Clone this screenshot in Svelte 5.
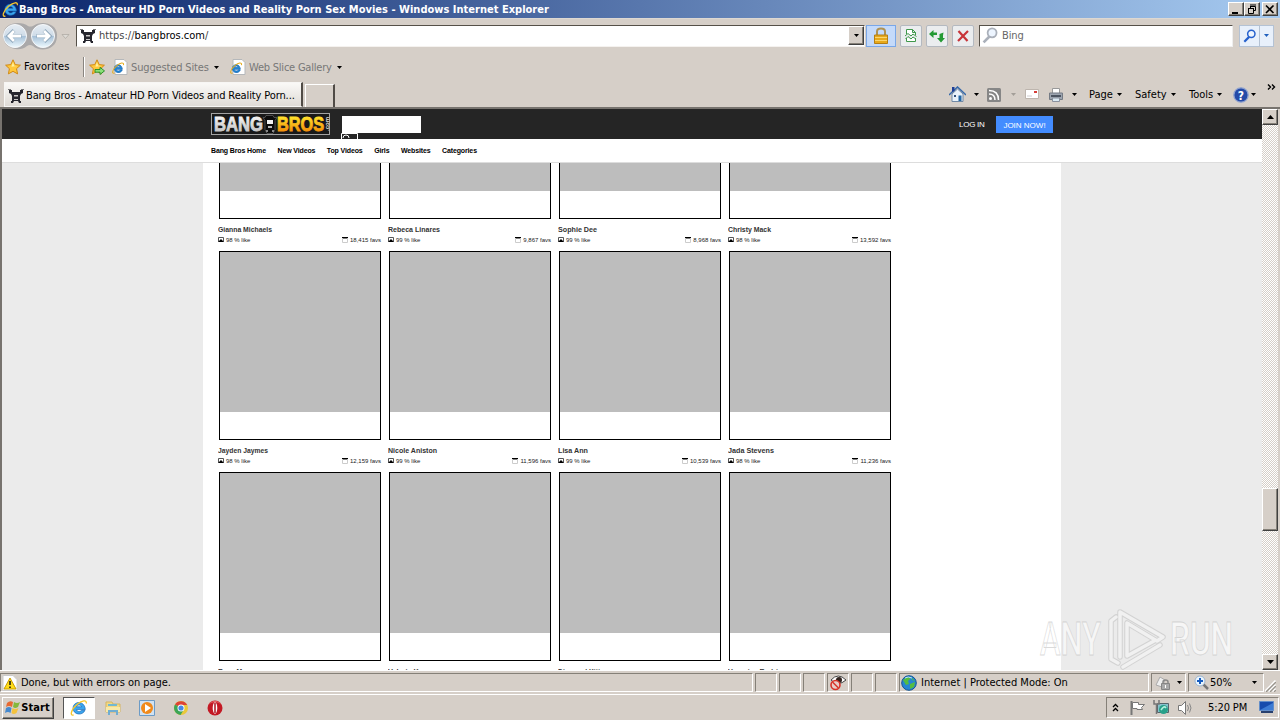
<script lang="ts">
  const sections = ['Bang Bros Home', 'New Videos', 'Top Videos', 'Girls', 'Websites', 'Categories'];

  const models = [
    { name: 'Gianna Michaels', like: 98, favs: '18,415', w: 54 },
    { name: 'Rebeca Linares', like: 99, favs: '9,867', w: 52 },
    { name: 'Sophie Dee', like: 99, favs: '8,968', w: 39 },
    { name: 'Christy Mack', like: 98, favs: '13,592', w: 43 },
    { name: 'Jayden Jaymes', like: 98, favs: '12,159', w: 50 },
    { name: 'Nicole Aniston', like: 99, favs: '11,596', w: 49 },
    { name: 'Lisa Ann', like: 99, favs: '10,539', w: 30 },
    { name: 'Jada Stevens', like: 98, favs: '11,236', w: 46 },
    { name: 'Rose Monroe', like: 98, favs: '9,120', w: 43 },
    { name: 'Valerie Kay', like: 98, favs: '8,740', w: 39 },
    { name: 'Diamond Kitty', like: 99, favs: '8,212', w: 46 },
    { name: 'Veronica Rodriguez', like: 98, favs: '8,031', w: 66 }
  ];
</script>

{#snippet ie(size)}
  <svg width={size} height={size} viewBox="0 0 16 16" fill="none">
    <path d="M13.600 9.400H5.800c.5 2.200 3.300 2.400 4.500.6h3c-1.900 5.200-10.600 4.200-10.600-1.800 0-6.500 10.400-7.400 10.900 1.200ZM5.800 6.900h4.500C9.800 4.900 6.300 4.800 5.800 6.900Z" fill="#3aa5ee" stroke="#1767b5" stroke-width=".6" />
    <path d="M3.200 14.200C-.3 15.400.6 9.600 6.500 4.700 10.700 1.200 15.200.4 14.400 4" stroke="#f5c62c" stroke-width="1.200" />
  </svg>
{/snippet}

{#snippet favicon()}
  <svg width="16" height="16" viewBox="0 0 16 16">
    <path d="M1 2h3v2h8V2h3v3l-2 1-1 2v5h1v2h-2l-1-2H6l-1 2H3v-2h1V8L3 6 1 5Z" fill="#25252d" />
    <path d="M6 7h4v1.500H6Zm0 4h4v1H6Z" fill="#c9c6c6" />
    <path d="M0 1h3v1H0Zm13 0h3v1h-3Z" fill="#777" />
  </svg>
{/snippet}

{#snippet page()}
  <svg width="16" height="16" viewBox="0 0 16 16">
    <path d="M3 .5h9l3 3v12H3Z" fill="#fff" stroke="#b5b8bb" />
    <g transform="translate(0 3) scale(.78)">
      <path d="M13.200 9.300H5.300c.3 2.700 4.100 3.100 5.300.9h2.500c-1.800 5.100-10 4.200-10-2 0-6.100 9.600-6.800 10.100 1.100ZM5.400 6.900h5.200C10.100 4.500 6 4.400 5.400 6.900Z" fill="#238cd8" stroke="#1767b5" />
      <path d="M3.200 14.200C-.7 15.800.3 9.600 6.500 4.400 10.700.8 15.600-.1 14.700 4" fill="none" stroke="#e5ad20" stroke-width="1.300" />
    </g>
  </svg>
{/snippet}

{#snippet star(arrow)}
  <svg width="16" height="16" viewBox="0 0 16 16">
    <path d="m8 .8 2.200 4.800 5.200.6-3.900 3.500 1.100 5.200L8 12.300l-4.600 2.600 1-5.200L.6 6.200l5.200-.6Z" fill="#ffc83b" stroke="#d18a16" />
    <path d="m8 3 1.200 3.700 3 .3-5.800.8Z" fill="#fff19c" />
    {#if arrow}
      <path d="M6 10.500h5V8.300l4.500 3.600-4.500 3.600v-2.300H6Z" fill="#8be078" stroke="#228b22" stroke-width=".9" />
    {/if}
  </svg>
{/snippet}

{#snippet down(color = '#000')}
  <svg class="down" width="5" height="3" viewBox="0 0 5 3"><path d="M0 0h5L2.500 3Z" fill={color} /></svg>
{/snippet}

{#snippet lens(color, size = 16)}
  <svg width={size} height={size} viewBox="0 0 16 16" fill="none">
    <path d="m7 9-5.500 5.500" stroke={color} stroke-width="2.500" />
    <circle cx="9.500" cy="5.500" r="4.200" fill="#edf5ff" stroke={color} stroke-width="1.700" />
  </svg>
{/snippet}

<div class="desktop">
  <header class="titlebar">
    {@render ie(17)}
    <span class="title">Bang Bros - Amateur HD Porn Videos and Reality Porn Sex Movies - Windows Internet Explorer</span>
    <div class="controls">
      <button class="raised" aria-label="Minimize"><svg width="12" height="11"><path d="M2 8h6v2H2Z" /></svg></button>
      <button class="raised" aria-label="Restore"><svg width="12" height="11" fill="none" stroke="#000"><path d="M4 1h6M4 2.500h5.500v4H8M4.500 2v2M2 4.500h6M2.500 5v4.500h5V5" /></svg></button>
      <button class="raised close" aria-label="Close"><svg width="12" height="11"><path d="m2 1.500 7.500 7.500M9.500 1.500 2 9" stroke="#000" stroke-width="1.600" /></svg></button>
    </div>
  </header>

  <div class="navbar">
    <svg class="travel" width="72" height="28" viewBox="0 0 72 28">
      <defs>
        <linearGradient id="orb" x2="0" y2="1"><stop stop-color="#e6edf3" /><stop offset=".48" stop-color="#cfdce8" /><stop offset=".52" stop-color="#a7c1d8" /><stop offset="1" stop-color="#eefaff" /></linearGradient>
      </defs>
      <path d="M3 14C3-1 22-1 28 4q2 1 5 0c8-6 25-3 24 10 0 15-18 16-24 10q-3-2-6 0C19 31 3 26 3 14Z" fill="#aaa9aa" />
      <circle cx="15" cy="14" r="11.500" fill="url(#orb)" stroke="#f6f8fa" />
      <circle cx="43" cy="14" r="11.500" fill="url(#orb)" stroke="#f6f8fa" />
      <path d="M8.500 14h13M14 8.500 8.500 14l5.500 5.500M36.500 14h13M44 8.500l5.500 5.500-5.500 5.500" fill="none" stroke="#8fa8bc" stroke-width="4" />
      <path d="M9 14h12M14 9l-5 5 5 5M37 14h12M44 9l5 5-5 5" fill="none" stroke="#fff" stroke-width="2.800" />
      <path d="M62 12.500h7l-3.500 4Z" fill="#dedbd6" stroke="#aaa69f" stroke-width=".7" />
    </svg>
    <div class="address">
      {@render favicon()}
      <span class="url"><i>https://</i>bangbros.com<i>/</i></span>
      <button class="raised drop" aria-label="Addresses">{@render down()}</button>
    </div>
    <button class="lock" aria-label="Security report">
      <svg width="16" height="18" viewBox="0 0 16 18"><path d="M4 8V4.500Q4 1.500 8 1.500t4 3V8" fill="none" stroke="#af9253" stroke-width="2" /><path d="M1.500 8h13v8.500h-13Z" fill="#e7a91b" stroke="#b57e13" /><path d="M2 10.500h12M2 13.500h12" stroke="#fbd66d" /></svg>
    </button>
    <button class="tool" aria-label="Compatibility view">
      <svg width="14" height="15" fill="#fff" stroke="#3f984b"><path d="M2.500 6V1.500h6l3 3V7M8.500 1.500v3h3M2.500 10v3.500h9V10" /><path d="m1 8 3-2.500L7 8l2-2 3.500 2.500M1.500 11 4 8.500l3 2.500 2-2 3 2" fill="none" /></svg>
    </button>
    <button class="tool" aria-label="Refresh">
      <svg width="16" height="14" fill="#259a34"><path d="M0 5 4.500 1v2.500H8v2.500H4.500V9ZM16 9l-4 4.500L8 9h2.500V5l4-1.500-.5 3V9Z" /></svg>
    </button>
    <button class="tool" aria-label="Stop">
      <svg width="14" height="14"><path d="m2.500 2 9 10M12 2 2 12" stroke="#c83439" stroke-width="2.200" /></svg>
    </button>
    <div class="search">{@render lens('#aab0ba', 17)}<span>Bing</span></div>
    <button class="go" aria-label="Search">{@render lens('#2560cd', 14)}</button>
    <button class="go more" aria-label="Search options">{@render down('#1f5fbd')}</button>
  </div>

  <div class="favorites">
    {@render star(false)}<span class="fav">Favorites</span>
    <i class="rule"></i>
    {@render star(true)}
    <span class="link sites">{@render page()}<span>Suggested Sites</span>{@render down()}</span>
    <span class="link slices">{@render page()}<span>Web Slice Gallery</span>{@render down()}</span>
  </div>

  <div class="tabs">
    <div class="tab">{@render favicon()}<span>Bang Bros - Amateur HD Porn Videos and Reality Porn...</span></div>
    <div class="newtab"></div>
    <div class="commands">
      <svg width="17" height="17" viewBox="0 0 17 17"><path d="M3 8v7.500h11V8L8.500 3Z" fill="#e9f2fa" stroke="#7189a5" /><path d="M0 9 8.500 1 17 9" fill="none" stroke="#3568a9" stroke-width="1.500" /><path d="M3 1h2.500v4L3 6Z" fill="#1d3e96" /><path d="M9.500 9.500h3V15h-3Z" fill="#2367a4" /><path d="M5 9h2v2H5Z" fill="#31507a" /></svg>
      <span class="arrow home">{@render down()}</span>
      <svg width="14" height="14"><rect width="14" height="14" rx="1.500" fill="#868686" /><circle cx="3.500" cy="10.500" r="1.500" fill="#fff" /><path d="M2 6q6 0 6 6M2 2.500q9.500 0 9.500 9.500" fill="none" stroke="#fff" stroke-width="1.500" /></svg>
      <span class="arrow feed">{@render down('#a39e98')}</span>
      <svg width="14" height="11"><path d="M.5.5h13v9H.5Z" fill="#fff" stroke="#bdb5ae" /><path d="M9 3h3" stroke="#d73e38" stroke-width="2" /><path d="M2 7h5" stroke="#d0ced0" /></svg>
      <svg class="printer" width="16" height="16"><path d="M4.500 1.500h7v5h-7Z" fill="#fff" stroke="#999" /><path d="M1.500 6h13v6.500h-13Z" fill="#9da5b0" stroke="#757b85" /><path d="M3 8h10v2H3Z" fill="#4c5461" /><path d="M4.500 11h7v3.500h-7Z" fill="#dbeaf4" stroke="#8a919e" /></svg>
      <span class="arrow print">{@render down()}</span>
      <span class="cmd pagecmd">Page{@render down()}</span>
      <span class="cmd safety">Safety{@render down()}</span>
      <span class="cmd toolscmd">Tools{@render down()}</span>
      <svg width="16" height="16"><circle cx="8" cy="8" r="7.200" fill="#244aa8" stroke="#8fa2cf" stroke-width="1.300" /><text x="8" y="12.500" text-anchor="middle" font-size="12" font-weight="bold" fill="#fff">?</text></svg>
      <span class="arrow help">{@render down()}</span>
      <svg class="chevron" width="9" height="7" fill="none" stroke="#000" stroke-width="1.400"><path d="m1 .5 2.500 2.500L1 5.500M5 .5 7.500 3 5 5.500" /></svg>
    </div>
  </div>

  <div class="viewport">
    <main class="site">
      <div class="masthead">
        <svg class="logo" width="120" height="23" viewBox="0 0 120 23" font-family="Liberation Sans" font-weight="bold">
          <defs>
            <linearGradient id="silver" x2="0" y2="1"><stop stop-color="#fff" /><stop offset="1" stop-color="#bbb" /></linearGradient>
            <linearGradient id="gold" x2="0" y2="1"><stop offset=".2" stop-color="#ffdf2b" /><stop offset="1" stop-color="#f27b00" /></linearGradient>
          </defs>
          <rect x=".5" y=".5" width="118" height="21" fill="#191919" stroke="#a3a3a3" />
          <text x="3" y="18" font-size="20" textLength="49" lengthAdjust="spacingAndGlyphs" fill="url(#silver)" stroke="url(#silver)" stroke-width=".9">BANG</text>
          <text x="66" y="18" font-size="20" textLength="47" lengthAdjust="spacingAndGlyphs" fill="url(#gold)" stroke="url(#gold)" stroke-width=".9">BROS</text>
          <path d="M55 2.500h7l1 2h3l-2 3v9l-2 4h-6l-2-4v-9l-2-3h2Z" fill="#0c0c0c" stroke="#666" stroke-width=".7" />
          <path d="M56 7h6v4h-6Z" fill="#f2f2f2" /><path d="M57 13h4v2h-4Z" fill="#bbb" /><path d="M55 17h2v2h-2ZM61 17h2v2h-2Z" fill="#888" />
          <text transform="translate(117.500 18) rotate(-90)" font-size="5" textLength="14" lengthAdjust="spacingAndGlyphs" fill="#ddd">.com</text>
        </svg>
        <div class="find">
          <svg width="17" height="6"><path d="M.5 6V.5h16V6" fill="#252525" stroke="#fff" /><path d="M2 5q0-3 3-3t3 3" fill="none" stroke="#fff" /></svg>
        </div>
        <span class="login">LOG IN</span>
        <span class="join">JOIN NOW!</span>
      </div>
      <nav>
        {#each sections as section}<span>{section}</span>{/each}
      </nav>
      <div class="body">
        <div class="grid">
          {#each models as m}
            <article>
              <div class="card"><div class="thumb"></div></div>
              <svg class="name" width="160" height="10"><text x="0" y="7" textLength={m.w} lengthAdjust="spacingAndGlyphs">{m.name}</text></svg>
              <div class="stats">
                <svg width="6" height="6"><path d="M.5.5h5v4h-5Z" fill="none" stroke="#555" /><path d="M0 5h6L3 2Z" /></svg>
                <span>{m.like} % like</span>
                <svg class="cal" width="6" height="6"><path d="M0 0h6v1.500H0Z" /><path d="M.5 1v4.500h5V1" fill="none" stroke="#ccc" /></svg>
                <span>{m.favs} favs</span>
              </div>
            </article>
          {/each}
        </div>
      </div>
    </main>
    <div class="scrollbar">
      <button class="raised" aria-label="Scroll up"><svg width="7" height="4"><path d="M0 4h7L3.500 0Z" /></svg></button>
      <div class="track"><div class="raised thumbbar"></div></div>
      <button class="raised" aria-label="Scroll down"><svg width="7" height="4"><path d="M0 0h7L3.500 4Z" /></svg></button>
    </div>
  </div>

  <div class="status">
    <div class="pane message">
      <svg width="16" height="16"><path d="M1 .5h10l4 4v11H1Z" fill="#fff" stroke="#ccc" /><path d="m8 3 6 11H2Z" fill="#ffdc18" stroke="#c89c00" /><path d="M8 6v4M8 11.500v1.500" stroke="#111" stroke-width="1.500" /></svg>
      <span>Done, but with errors on page.</span>
    </div>
    <div class="pane small"></div><div class="pane small"></div><div class="pane small"></div>
    <div class="pane small privacy">
      <svg width="18" height="16"><path d="M2 5Q9-3 17 5 9 12 2 5Z" fill="#fff" stroke="#444" /><circle cx="10" cy="5" r="3" fill="#31231e" /><circle cx="6.500" cy="10" r="4.500" fill="#e8cec8" stroke="#d83529" stroke-width="1.600" /><path d="m3.500 7 6 6" stroke="#d83529" stroke-width="1.500" /></svg>
    </div>
    <div class="pane small"></div><div class="pane small"></div>
    <div class="pane zone">
      <svg width="16" height="16"><circle cx="8" cy="8" r="7.300" fill="#2686d2" stroke="#155491" /><path d="m2 5 4-3 4 1-3 3 1 3-3 1ZM9 9l5-2-1 5-4 2ZM11 3l3 3-3-1Z" fill="#55bd40" /><path d="M4 3q3-2 7 0" stroke="#bce6fa" fill="none" /></svg>
      <span>Internet | Protected Mode: On</span>
    </div>
    <div class="pane protect">
      <svg width="18" height="16"><path d="m2 10 4-8 5 3-3 7Z" fill="#eee" stroke="#aaa" /><path d="M9 9V7q0-2 2.500-2T14 7v2" fill="none" stroke="#888" stroke-width="1.500" /><path d="M7.500 8.500h8v6h-8Z" fill="#aaa" stroke="#858585" /><path d="M11.500 10v3" stroke="#fff" /></svg>{@render down()}
    </div>
    <div class="pane zoom">
      <svg width="16" height="16"><path d="m9 9 5 5" stroke="#777" stroke-width="2.500" /><circle cx="6" cy="6" r="5" fill="#eaf5fd" stroke="#9bb3ce" /><path d="M6 3v6M3 6h6" stroke="#165cc0" stroke-width="2" /></svg><span>50%</span>{@render down()}
    </div>
    <svg class="grip" width="11" height="12"><path d="M0 12 11 1M4 12l7-7M8 12l3-3" stroke="#fff" stroke-width="3" /><path d="M1 12 11 2M5 12l6-6M9 12l2-2" stroke="#99948c" stroke-width="1.500" /></svg>
  </div>

  <footer class="taskbar">
    <button class="raised start">
      <svg width="17" height="16"><path d="M3 3q3-3 6-1L8 7Q5 5 2 7Z" fill="#e76932" /><path d="M10 2q3 2 6 0l-2 5q-3 2-5 0Z" fill="#85b83c" /><path d="M2 8q3-2 5.500 0l-1 5Q4 11 1 13Z" fill="#4589cf" /><path d="M8.500 8q3 2 6 0l-2 5q-3 2-5 0Z" fill="#f4c23d" /></svg>
      Start
    </button>
    <div class="active">{@render ie(18)}</div>
    <svg class="explorer" width="16" height="16"><path d="M1 2h6l1 2h7v8H1Z" fill="#f2d985" stroke="#d5b561" /><path d="M3 4h9v2H3Z" fill="#73b8d3" /><path d="M1 7h14v5H1Z" fill="#f8e9a9" /><path d="M3 15v-5h10v5h-2v-3H5v3Z" fill="#70add1" /></svg>
    <svg class="player" width="16" height="16"><path d="M.5.5h15v15H.5Z" fill="#d1e2f2" stroke="#6c9bc6" /><circle cx="8" cy="8" r="6" fill="#f18a1b" /><path d="m6 4 6 4-6 4Z" fill="#fff" /></svg>
    <svg class="chrome" width="14" height="14"><circle cx="7" cy="7" r="7" fill="#e9c83a" /><path d="M7 7 1 3.500A7 7 0 0 1 13.200 4H7Z" fill="#dd4336" /><path d="M7 7 1 3.500A7 7 0 0 0 6.500 14L10 8.500Z" fill="#3ca557" /><circle cx="7" cy="7" r="3.500" fill="#fff" /><circle cx="7" cy="7" r="2.600" fill="#4688e5" /></svg>
    <svg class="opera" width="16" height="16"><circle cx="8" cy="8" r="7.500" fill="#c31924" /><path d="M1 5Q8-3 15 5q-3-3-7-3T1 5Z" fill="#e96d6e" /><ellipse cx="8" cy="8" rx="2.300" ry="5.700" fill="#fff" /><path d="M8 3v10" stroke="#a91420" stroke-width="1.500" /></svg>
    <div class="tray">
      <svg class="up" width="7" height="9" fill="none" stroke="#000" stroke-width="1.300"><path d="m1 4 2.500-2.500L6 4M1 8l2.500-2.500L6 8" /></svg>
      <svg class="flag" width="16" height="16"><path d="M1.500 1v14" stroke="#777" stroke-width="2" /><path d="M2.500 2.500h6v2h6l-3 3 1 2H7v-1H2.500Z" fill="#fff" stroke="#777" /></svg>
      <svg class="net" width="17" height="17"><path d="M4.500 4.500h11v9h-11Z" fill="#87c2cc" stroke="#58656b" /><circle cx="10.500" cy="10.500" r="4.500" fill="#28a18a" /><path d="M8 11q3-5 5-2" fill="none" stroke="#b4f1df" stroke-width="1.500" /><path d="M1 1v4h5V1M3.500 5v10" fill="none" stroke="#777" stroke-width="1.500" /></svg>
      <svg class="sound" width="17" height="16" fill="none"><path d="M1.500 5.500h3l4-4v13l-4-4h-3Z" fill="#fff" stroke="#777" /><path d="M10.500 5q2 3 0 6M12.500 3.500q3 4.500 0 9" stroke="#888" /></svg>
      <span>5:20 PM</span>
      <svg class="show" width="15" height="13"><path d="M.5.5h14v9H.5Z" fill="#164bad" stroke="#638ec9" /><path d="m1 9 13-7v7Z" fill="#3c7bd4" /><path d="M2 11h12" stroke="#28406e" stroke-width="2" /></svg>
    </div>
  </footer>

  <svg class="watermark" width="200" height="66" viewBox="0 0 200 66" font-family="Roboto" font-weight="500">
    <g fill="#fff" fill-opacity=".6" stroke="#b5b5b5" stroke-opacity=".5" stroke-width=".8">
      <text x="4" y="48" font-size="46" textLength="61" lengthAdjust="spacingAndGlyphs">ANY</text>
      <text x="134" y="48" font-size="46" textLength="63" lengthAdjust="spacingAndGlyphs">RUN</text>
    </g>
    <g fill="none" stroke-linejoin="round" stroke-linecap="round">
      <path d="m124 38-37 21V24M84 48V5l42 24M126 29l-28-3M96 22v24l22-11-30-18M78 11l-5 3v38l6 4" stroke="none" />
      <path d="M84 50V5l43 25-6 4-30-18v33l27-15M124 38 87 60M80 10l-5 4v38l7 4" stroke="#bbb" stroke-width="5.500" stroke-opacity=".5" />
      <path d="M84 50V5l43 25-6 4-30-18v33l27-15M124 38 87 60M80 10l-5 4v38l7 4" stroke="#f6f6f6" stroke-width="3.500" stroke-opacity=".85" />
    </g>
  </svg>
</div>

<style>
  :global(body) { margin: 0; overflow: hidden; }

  .desktop {
    position: relative;
    display: flex;
    flex-direction: column;
    width: 1280px;
    height: 720px;
    overflow: hidden;
    background: #d6cfc8;
    font: 11px/14px "DejaVu Sans Condensed", "DejaVu Sans", sans-serif;
    color: #000;
    white-space: nowrap;
  }

  .desktop * { box-sizing: border-box; }
  svg { display: block; flex: none; }
  button { font: inherit; padding: 0; border-radius: 0; display: flex; align-items: center; justify-content: center; flex: none; }
  i { font-style: normal; }

  .raised {
    background: #d6cfc8;
    border: 1px solid;
    border-color: #fff #404040 #404040 #fff;
    box-shadow: inset -1px -1px #858078;
  }

  .titlebar {
    height: 18px;
    flex: none;
    display: flex;
    align-items: center;
    padding-left: 2px;
    background: linear-gradient(90deg, #0a246a, #a6caf0);
    color: #fff;
    font-weight: bold;
  }
  .title { letter-spacing: 0.01px; padding-top: 1px; }
  .controls { display: flex; margin-left: auto; padding-right: 2px; }
  .controls button { width: 16px; height: 14px; }
  .controls .close { margin-left: 2px; }

  .navbar { height: 34px; flex: none; display: flex; align-items: center; border-top: 1px solid #ddd8d2; }
  .travel { margin-right: 4px; }
  .address {
    width: 789px;
    height: 22px;
    display: flex;
    align-items: center;
    background: #fff;
    border: 1px solid;
    border-color: #555048 #f5f2ef #f5f2ef #555048;
    padding-left: 3px;
  }
  .url { margin-left: 3px; padding-top: 1px; }
  .url i { color: #444; }
  .drop { width: 16px; height: 19px; margin-left: auto; }
  .lock { width: 30px; height: 22px; margin: 0 4px 0 1px; border: 1px solid #79a7e8; background: #c4dafa; }
  .tool { width: 22px; height: 22px; margin-right: 4px; border: 1px solid #b4b9c0; background: #ebedef; border-radius: 2px; }
  .search {
    width: 254px;
    height: 22px;
    margin: 0 6px 0 1px;
    display: flex;
    align-items: center;
    background: #fff;
    border: 1px solid;
    border-color: #555048 #eee #eee #555048;
    color: #666;
    padding-left: 2px;
  }
  .search span { margin-left: 3px; padding-top: 1px; letter-spacing: -0.1px; }
  .go { width: 21px; height: 22px; border: 1px solid #b4c2d4; background: #e8f0fb; }
  .more { width: 14px; border-left: 0; }

  .favorites { height: 30px; flex: none; display: flex; align-items: center; padding-left: 5px; }
  .fav { width: 60px; margin-left: 3px; letter-spacing: 0.1px; }
  .rule { width: 2px; height: 20px; border-left: 1px solid #898580; background: #fff; margin: 0 4px 0 -1px; }
  .link { display: flex; align-items: center; color: #777; }
  .link > span { margin: 0 5px 0 3px; padding-top: 1px; }
  .sites { width: 118px; margin-left: 7px; letter-spacing: -0.15px; }
  .slices { letter-spacing: -0.22px; }

  .tabs { height: 27px; flex: none; display: flex; padding-left: 4px; border-bottom: 2px solid #77736e; }
  .tab {
    width: 299px;
    height: 25px;
    display: flex;
    align-items: center;
    padding: 3px 0 0 3px;
    background: linear-gradient(#faf9f7, #dfdbd6);
    border: 1px solid #f7f6f4;
    border-right: 2px solid #504b46;
  }
  .tab span { margin-left: 2px; letter-spacing: -0.12px; }
  .newtab { width: 30px; margin: 2px 0 0 2px; border: 1px solid #fff; border-right: 2px solid #504b46; border-bottom: 0; }
  .commands { width: 331px; height: 25px; margin-left: auto; display: flex; align-items: center; }
  .arrow { flex: none; padding-left: 8px; }
  .home { width: 21px; }
  .feed { width: 24px; padding-left: 10px; }
  .printer { margin-left: 9px; }
  .print { width: 25px; }
  .cmd { display: flex; align-items: center; gap: 4px; flex: none; }
  .pagecmd { width: 46px; }
  .safety { width: 54px; }
  .toolscmd { width: 44px; }
  .help { width: 18px; padding-left: 2px; }
  .chevron { margin: -14px 0 0; }

  .viewport { height: 561px; flex: none; display: flex; border-left: 2px solid #77736e; }
  .site { width: 1260px; display: flex; flex-direction: column; overflow: hidden; background: #ebebeb; font-family: "Liberation Sans", Arial, sans-serif; }
  .masthead { height: 30px; flex: none; display: flex; background: #252525; padding-left: 209px; }
  .logo { margin-top: 4px; }
  .find { position: relative; width: 79px; height: 17px; margin: 7px 0 0 11px; background: #fff; }
  .find svg { position: absolute; top: 17px; left: -1px; }
  .login { margin: 9px 11px 0 538px; color: #fff; font-size: 8px; width: 26px; letter-spacing: -0.25px; }
  .join { width: 57px; height: 17px; margin-top: 7px; background: #438cff; color: #fff; font-size: 8px; line-height: 19px; text-align: center; }

  nav { height: 24px; flex: none; display: flex; gap: 11.500px; padding: 5px 0 0 209px; background: #fff; border-bottom: 1px solid #ddd; font-size: 7px; font-weight: bold; letter-spacing: -0.13px; }
  .body { width: 858px; height: 507px; flex: none; overflow: hidden; margin-left: 201px; background: #fff; }
  .grid { display: grid; grid-template-columns: repeat(4, 162px); column-gap: 8px; margin: -133px 0 0 16px; }
  article { height: 221px; }
  .card { height: 189px; border: 1px solid #000; }
  .thumb { height: 160px; background: #bdbdbd; }
  .name { margin: 6px 0 0 -1px; font: bold 7px "Liberation Sans", sans-serif; fill: #333; }
  .stats { height: 10px; display: flex; align-items: center; gap: 2px; margin: 0 0 0 -1px; font-size: 6px; color: #222; }
  .stats .cal { margin-left: auto; }

  .scrollbar { width: 16px; display: flex; flex-direction: column; }
  .scrollbar button { height: 16px; }
  .track { flex: 1; padding-top: 363px; background: repeating-conic-gradient(#fff 0 25%, #d6cfc8 0 50%) 0 0 / 2px 2px; }
  .thumbbar { height: 43px; }

  .status { height: 25px; flex: none; display: flex; align-items: flex-end; padding-bottom: 2px; border-top: 1px solid #fff; border-bottom: 1px solid #fff; }
  .pane { height: 19px; display: flex; align-items: center; flex: none; border: 1px solid; border-color: #858078 #fff #fff #858078; margin-right: 2px; }
  .message { width: 753px; padding-left: 1px; }
  .message span { margin-left: 3px; padding-top: 1px; letter-spacing: -0.06px; }
  .small { width: 22px; }
  .privacy svg { margin-left: 1px; }
  .zone { width: 250px; padding-left: 1px; }
  .zone span { margin-left: 4px; padding-top: 1px; }
  .protect { width: 35px; padding-left: 2px; gap: 5px; }
  .zoom { width: 76px; padding-left: 5px; }
  .zoom :global(.down) { margin-left: auto; margin-right: 6px; }
  .grip { margin-left: -1px; }

  .taskbar { flex: 1; display: flex; align-items: center; padding-left: 2px; }
  .start { width: 52px; height: 22px; font-weight: bold; gap: 0; letter-spacing: 0.1px; padding-right: 2px; }
  .active { width: 32px; height: 22px; margin-left: 9px; display: flex; align-items: center; justify-content: center; background: #fff; border: 1px solid; border-color: #555 #fff #fff #555; }
  .explorer { margin-left: 10px; }
  .player { margin-left: 18px; }
  .chrome { margin-left: 19px; }
  .opera { margin-left: 19px; }
  .tray { width: 173px; height: 21px; margin-left: auto; margin-right: 1px; display: flex; align-items: center; border: 1px solid; border-color: #858078 #fff #fff #858078; }
  .up { margin-left: 5px; }
  .flag { margin-left: 11px; }
  .net { margin-left: 7px; }
  .sound { margin-left: 7px; }
  .tray span { width: 42px; margin-left: 14px; letter-spacing: -0.1px; }
  .show { margin-left: 9px; }

  .watermark { position: absolute; left: 1036px; top: 607px; }
</style>
